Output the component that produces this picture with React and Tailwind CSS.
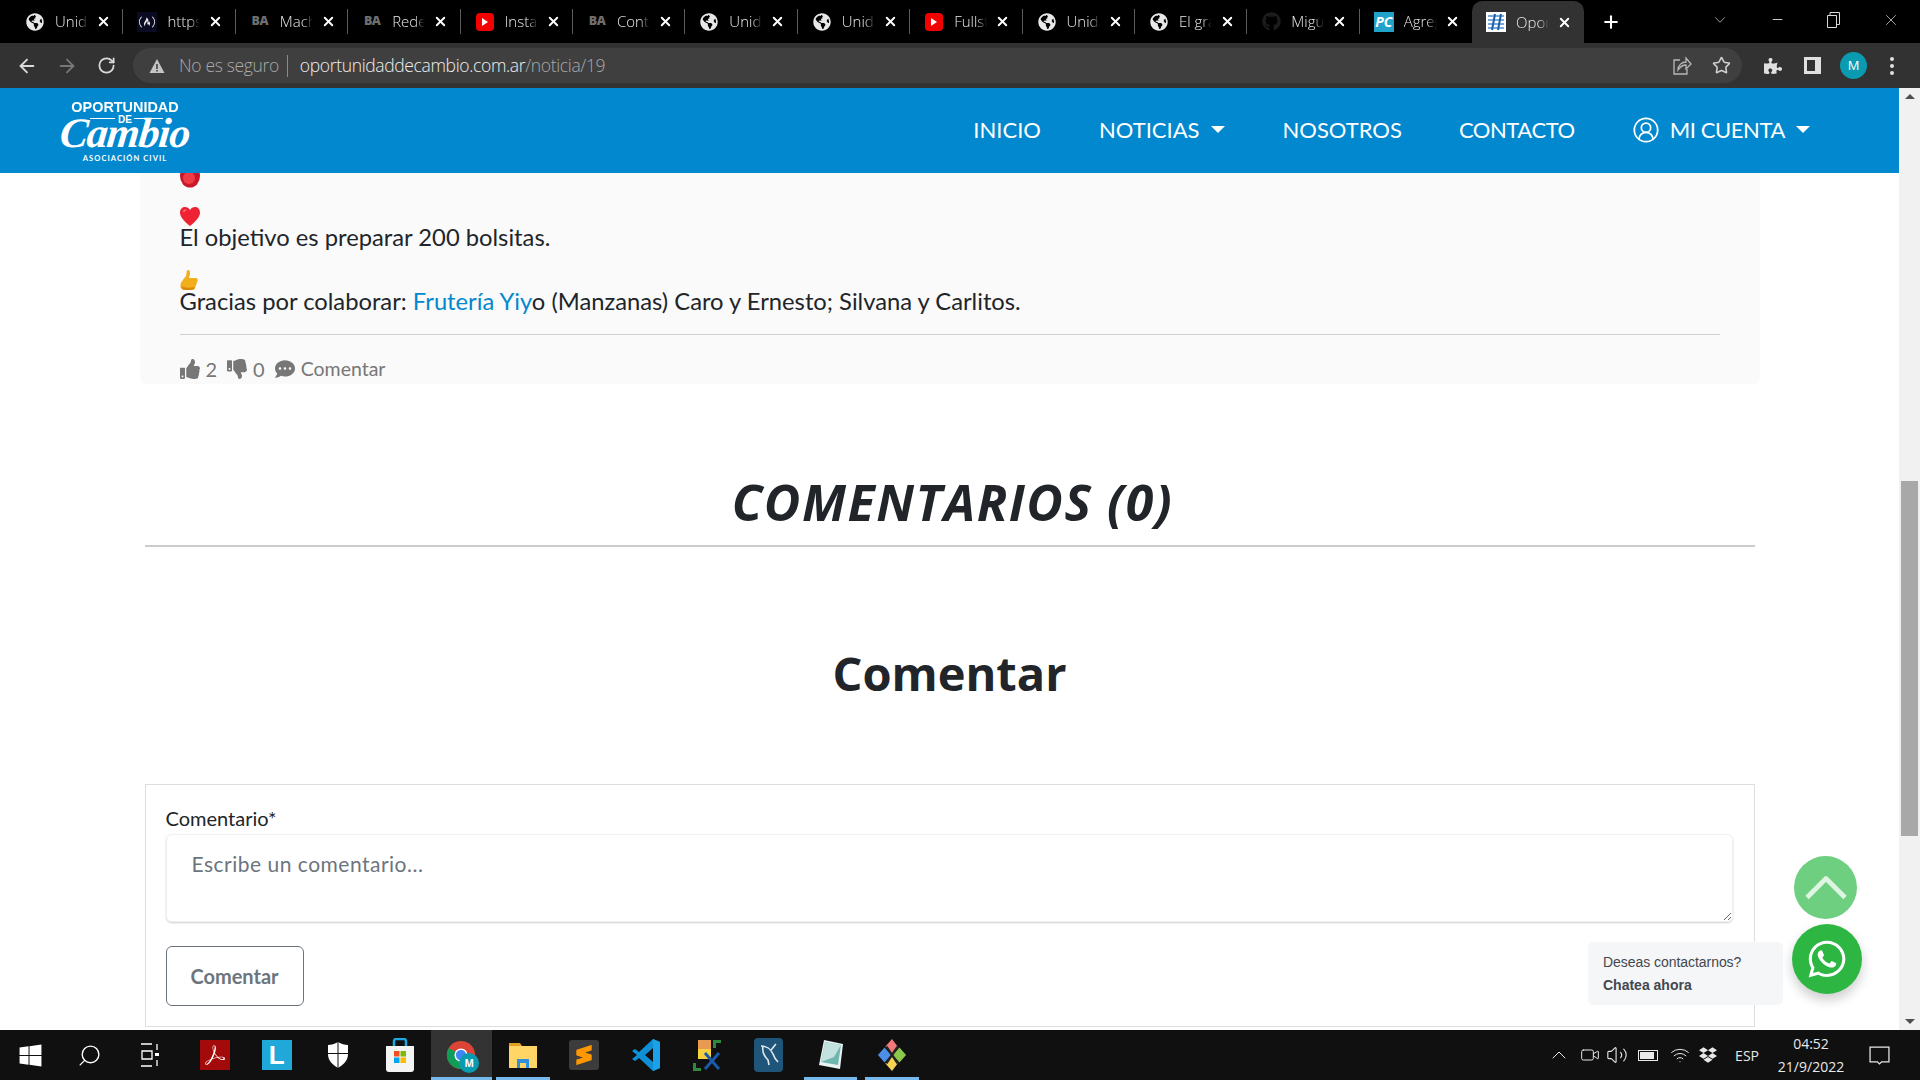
import React from "react";
import {
  ArrowLeft,
  ArrowRight,
  RotateCw,
  Star,
  ChevronDown,
  ChevronUp,
  Plus,
  X,
  Minus,
  Video,
  Volume2,
  Wifi,
  Search,
  CircleUserRound,
} from "lucide-react";
import {
  FaGlobeAmericas,
  FaGithub,
  FaThumbsUp,
  FaThumbsDown,
  FaCommentDots,
  FaWhatsapp,
  FaDropbox,
  FaWindows,
  FaPuzzlePiece,
} from "react-icons/fa";
import { SiFreecodecamp, SiAdobeacrobatreader, SiSublimetext } from "react-icons/si";

const jost = "font-['Lato','Liberation_Sans',sans-serif]";
const ui = "font-['Open_Sans','Liberation_Sans',sans-serif]";

const Globe = () => <FaGlobeAmericas className="w-[18px] h-[18px] text-[#e8e8e8]" />;

const Ba = () => (
  <span className="w-[18px] h-[18px] flex items-center justify-center text-[12.5px] tracking-[-0.5px] font-black text-[#6e6e6e] leading-none">
    BA
  </span>
);

const Yt = () => (
  <span className="w-[18px] h-[18px] flex items-center justify-center bg-[#f40000] rounded-[4px]">
    <span className="w-0 h-0 border-y-[4px] border-y-transparent border-l-[6px] border-l-white" />
  </span>
);

const Fcc = () => (
  <span className="w-[20px] h-[20px] flex items-center justify-center bg-[#0a0a23]">
    <SiFreecodecamp className="w-[16px] h-[16px] text-[#e8e8e8]" />
  </span>
);

const Git = () => <FaGithub className="w-[19px] h-[19px] text-[#1c1c1c]" />;

const Pc = () => (
  <span className="w-[20px] h-[20px] flex items-center justify-center bg-[#21a3c9] text-white text-[14px] font-bold italic leading-none">
    PC
  </span>
);

const Site = () => (
  <svg viewBox="0 0 20 20" className="w-[20px] h-[20px]">
    <rect width="20" height="20" fill="#fff" />
    <path d="M2 4h16M2 8h16M2 12h16M2 16h16" stroke="#4a90d0" strokeWidth="1.500" />
    <path d="M6 18 9 2M12 18l3-16" stroke="#1c5fa8" strokeWidth="2" />
  </svg>
);

const tabs = [
  { icon: <Globe />, title: "Unidad" },
  { icon: <Fcc />, title: "https" },
  { icon: <Ba />, title: "Machine" },
  { icon: <Ba />, title: "Redes" },
  { icon: <Yt />, title: "Instal" },
  { icon: <Ba />, title: "Contin" },
  { icon: <Globe />, title: "Unidad" },
  { icon: <Globe />, title: "Unidad" },
  { icon: <Yt />, title: "Fullstack" },
  { icon: <Globe />, title: "Unidad" },
  { icon: <Globe />, title: "El gran" },
  { icon: <Git />, title: "Miguel" },
  { icon: <Pc />, title: "Agregar" },
  { icon: <Site />, title: "Oportunidad", active: true },
];

const TabBar = () => (
  <div className={`h-[43px] bg-black flex items-stretch pl-[11px] text-[#e8e8e8] ${ui}`}>
    {tabs.map((tab, i) => (
      <div
        key={i}
        className={`w-[112.4px] shrink-0 flex items-center pl-[14px] relative ${
          tab.active ? "bg-[#323232] rounded-t-[10px] mt-[1px]" : ""
        }`}
      >
        <span className="w-[20px] flex justify-center shrink-0">{tab.icon}</span>
        <span className="ml-[10px] w-[33px] overflow-hidden whitespace-nowrap text-[15px] font-light [mask-image:linear-gradient(90deg,#000_70%,transparent)]">
          {tab.title}
        </span>
        <X className="ml-[8px] w-[15px] h-[15px] shrink-0 text-white" strokeWidth={3} />
        {!tab.active && i < 12 && (
          <span className="absolute right-0 top-[9px] bottom-[9px] w-px bg-[#5a5a5a]" />
        )}
      </div>
    ))}
    <div className="ml-[13px] w-[28px] flex items-center justify-center">
      <Plus className="w-[20px] h-[20px] text-white" strokeWidth={2.5} />
    </div>
    <div className="ml-auto flex items-center pb-[4px] text-[#d8d8d8]">
      <ChevronDown className="w-[18px] h-[18px] mr-[41px]" strokeWidth={1} />
      <Minus className="w-[15px] h-[15px] mr-[42px]" strokeWidth={1.5} />
      <svg viewBox="0 0 13 16" className="w-[13px] h-[16px] mr-[42px]" fill="none" stroke="#d8d8d8" strokeWidth="1">
        <path d="M.5 3.500h9v12h-9zM3 3.500V.5h9.500v12H9.500" />
      </svg>
      <X className="w-[18px] h-[18px] mr-[20px]" strokeWidth={1} />
    </div>
  </div>
);

const ShareBox = () => (
  <svg viewBox="0 0 20 20" className="ml-auto w-[20px] h-[20px]" fill="none" stroke="#b8b8b8" strokeWidth="1.300">
    <path d="M8 4H2v14h13v-5" />
    <path d="M6 14c0-5 4-8 8-8V2l5 6-5 5V9c-4 0-6 2-8 5Z" />
  </svg>
);

const Toolbar = () => (
  <div className={`h-[45px] bg-[#323232] flex items-center pl-[16px] pr-[19px] ${ui}`}>
    <ArrowLeft className="w-[22px] h-[22px] text-[#dadada]" strokeWidth={2} />
    <ArrowRight className="ml-[18px] w-[22px] h-[22px] text-[#777]" strokeWidth={2} />
    <RotateCw className="ml-[19px] w-[19px] h-[19px] text-[#dadada]" strokeWidth={2.2} />
    <div className="ml-[17px] w-[1609px] h-[35px] rounded-full bg-[#3f3f3f] flex items-center pl-[16px] text-[17.5px] tracking-[-0.35px] font-light">
      <svg viewBox="0 0 16 16" className="w-[16px] h-[16px]">
        <path d="M8 1 15.5 15H.5Z" fill="#c4c4c4" />
        <path d="M7.2 6h1.6v5H7.2zM7.2 12h1.6v1.6H7.2z" fill="#3f3f3f" />
      </svg>
      <span className="ml-[14px] text-[#a9a9a9]">No es seguro</span>
      <span className="ml-[8px] w-px h-[22px] bg-[#8a8a8a]" />
      <span className="ml-[12px] text-[#f0f0f0]">oportunidaddecambio.com.ar</span>
      <span className="text-[#a9a9a9]">/noticia/19</span>
      <ShareBox />
      <Star className="ml-[20px] mr-[11px] w-[19px] h-[19px] text-[#d0d0d0]" strokeWidth={2} />
    </div>
    <FaPuzzlePiece className="ml-[22px] w-[18px] h-[18px] text-[#e0e0e0]" />
    <span className="ml-[22px] w-[17px] h-[17px] border-[3px] border-[#e0e0e0] border-r-[6px]" />
    <span className="ml-[19px] w-[27px] h-[27px] rounded-full bg-[#0b9bb0] flex items-center justify-center text-[13px] text-white">
      M
    </span>
    <span className="ml-[23px] flex flex-col gap-[3px]">
      <span className="w-[4px] h-[4px] rounded-full bg-[#e0e0e0]" />
      <span className="w-[4px] h-[4px] rounded-full bg-[#e0e0e0]" />
      <span className="w-[4px] h-[4px] rounded-full bg-[#e0e0e0]" />
    </span>
  </div>
);

const Caret = () => (
  <span className="ml-[11px] w-0 h-0 border-x-[7.5px] border-x-transparent border-t-[7px] border-t-white" />
);

const Logo = () => (
  <div className="ml-[60px] w-[130px] h-[64px] relative text-white text-center">
    <div className="text-[15.5px] leading-[16px] font-bold font-['Liberation_Sans',sans-serif] scale-x-[0.93] whitespace-nowrap">
      OPORTUNIDAD
    </div>
    <div className="text-[10px] leading-[9px] font-bold font-['Liberation_Sans',sans-serif]">DE</div>
    <span className="absolute left-[30px] top-[19px] w-[25px] h-px bg-white" />
    <span className="absolute left-[74px] top-[19px] w-[29px] h-px bg-white" />
    <div className="absolute left-0 top-[13px] w-full text-[42px] leading-[42px] italic font-bold font-['Liberation_Serif',serif] tracking-[-1px] -skew-x-6">
      Cambio
    </div>
    <div className="absolute left-[0px] right-0 bottom-0 text-[7.5px] leading-[8px] font-bold tracking-[1.1px] font-['Lato',sans-serif]">
      ASOCIACIÓN CIVIL
    </div>
  </div>
);

const Navbar = () => (
  <div className={`h-[85px] shrink-0 bg-[#0288ce] flex items-center text-white text-[22px] ${jost}`}>
    <Logo />
    <div className="ml-auto flex items-center mr-[89px] pb-[2px]">
      <span>INICIO</span>
      <span className="ml-[58px]">NOTICIAS</span>
      <Caret />
      <span className="ml-[58px]">NOSOTROS</span>
      <span className="ml-[57px] tracking-[-0.45px]">CONTACTO</span>
      <CircleUserRound className="ml-[57px] w-[28px] h-[28px]" strokeWidth={1.5} />
      <span className="ml-[10px] tracking-[-0.4px]">MI CUENTA</span>
      <Caret />
    </div>
  </div>
);

const Apple = () => (
  <svg viewBox="0 0 20 24" className="w-[20px] h-[24px] block">
    <ellipse cx="10" cy="12" rx="10" ry="11.500" fill="#c9172a" />
    <ellipse cx="9" cy="14" rx="6" ry="6" fill="#ee3b45" />
  </svg>
);

const Heart = () => (
  <svg viewBox="0 0 20 19" className="w-[20px] h-[19px] block">
    <path d="M10 19C4 14 0 10 0 5.500 0 2 2.500 0 5 0c2 0 4 1 5 3 1-2 3-3 5-3 2.500 0 5 2 5 5.500C20 10 16 14 10 19Z" fill="#ee2233" />
    <path d="M3 4c1-1.500 3-2 4-1-1 .3-2.500 1-3 2.500Z" fill="#ff8088" />
  </svg>
);

const ThumbEmoji = () => (
  <svg viewBox="0 0 18 20" className="w-[18px] h-[20px] block">
    <path d="M8 0c2 0 2 2 2 4l-1 4h7c2 0 2 2 1.500 3L15 18c-.5 1.500-2 2-3 2H5c-3 0-5-2-4.500-5C1 11 4 9 6 6c1-2 0-6 2-6Z" fill="#f2ae1c" />
    <path d="M1 16c3 2 9 2 14 1l-1 2-3 1H5c-2 0-3-1-4-4Z" fill="#d98a0c" />
  </svg>
);

const Card = () => (
  <div className={`w-[1620px] mx-auto shrink-0 bg-[#fafafa] rounded-b-md px-[40px] text-[#212529] ${jost}`}>
    <div className="h-[34px] overflow-hidden">
      <div className="-mt-[9px]"><Apple /></div>
    </div>
    <div className="h-[17px]"><Heart /></div>
    <p className="text-[23.75px] leading-[26px]">El objetivo es preparar 200 bolsitas.</p>
    <div className="mt-[20px] h-[18px]"><ThumbEmoji /></div>
    <p className="text-[23.75px] leading-[26px]">
      Gracias por colaborar: <span className="text-[#0288ce]">Frutería Yiy</span>o (Manzanas) Caro y Ernesto; Silvana y Carlitos.
    </p>
    <div className="mt-[20px] h-px bg-[#cfcfcf]" />
    <div className="mt-[19px] h-[30px] flex items-center text-[#777] text-[20px]">
      <FaThumbsUp className="w-[20px] h-[20px]" />
      <span className="ml-[6px]">2</span>
      <FaThumbsDown className="ml-[10px] w-[20px] h-[20px]" />
      <span className="ml-[6px]">0</span>
      <FaCommentDots className="ml-[10px] w-[20px] h-[20px]" />
      <span className="ml-[6px] text-[19.5px]">Comentar</span>
    </div>
  </div>
);

const CommentForm = () => (
  <form className={`w-[1610px] h-[243px] mx-auto shrink-0 border border-[#dedede] pt-[21px] pl-[20px] pr-[21px] ${jost}`}>
    <label className="block text-[20px] leading-[24px] text-[#212529]">Comentario*</label>
    <textarea
      readOnly
      placeholder="Escribe un comentario..."
      className={`mt-[4px] block w-full h-[88px] rounded-md border border-[#f0f0f0] shadow-[0_1px_2px_rgba(0,0,0,0.2)] px-[25px] pt-[14px] text-[21px] leading-[30px] tracking-[0.5px] outline-none placeholder:text-[#6c757d] ${jost}`}
    />
    <button
      type="button"
      className="mt-[24px] block w-[138px] h-[60px] rounded-md border border-[#6c757d] text-[#6c757d] text-[20px] font-bold"
    >
      Comentar
    </button>
  </form>
);

const Floating = () => (
  <>
    <div className="absolute right-[42px] bottom-[111px] w-[63px] h-[63px] rounded-full bg-[#6dcf7f] flex items-center justify-center">
      <ChevronUp className="w-[76px] h-[76px] shrink-0 text-[#def5e2]" strokeWidth={1.5} strokeLinecap="butt" />
    </div>
    <div className="absolute right-[37px] bottom-[36px] w-[70px] h-[70px] rounded-full bg-[#2db742] shadow-[0_6px_12px_rgba(0,0,0,0.2)] flex items-center justify-center">
      <FaWhatsapp className="w-[42px] h-[42px] text-white" />
    </div>
    <div className="absolute right-[116px] bottom-[25px] w-[195px] h-[63px] rounded-[5px] bg-[#f5f6f8] pl-[15px] pt-[10px] text-[#43474e] font-['Liberation_Sans',sans-serif] text-[14px]">
      <div className="leading-[20px] font-light tracking-[-0.05px]">Deseas contactarnos?</div>
      <div className="mt-[3px] leading-[20px] font-bold">Chatea ahora</div>
    </div>
  </>
);

const Scrollbar = () => (
  <div className="w-[21px] shrink-0 bg-[#f1f1f1] flex flex-col items-center">
    <span className="mt-[6px] w-0 h-0 border-x-[5px] border-x-transparent border-b-[5px] border-b-[#505050]" />
    <div className="mt-[382px] w-[17px] h-[355px] bg-[#a8a8a8]" />
    <span className="mt-auto mb-[6px] w-0 h-0 border-x-[5px] border-x-transparent border-t-[5px] border-t-[#505050]" />
  </div>
);

const Page = () => (
  <div className="flex-1 min-h-0 flex bg-white">
    <div className="flex-1 min-w-0 flex flex-col">
      <Navbar />
      <main className="flex-1 min-h-0 relative overflow-hidden flex flex-col">
        <Card />
        <h2 className="mt-[88px] pl-[6px] text-center text-[#212529] text-[50px] tracking-[1.6px] leading-[60px] font-bold italic font-['Open_Sans',sans-serif]">
          COMENTARIOS (0)
        </h2>
        <div className="mt-[13px] w-[1610px] h-[2px] mx-auto shrink-0 bg-[#cccccc]" />
        <h2 className="mt-[96px] text-center text-[#212529] text-[47px] leading-[60px] font-bold font-['Open_Sans',sans-serif]">
          Comentar
        </h2>
        <div className="mt-[81px]">
          <CommentForm />
        </div>
        <Floating />
      </main>
    </div>
    <Scrollbar />
  </div>
);

const Chrome = () => (
  <span className="relative w-[30px] h-[30px] block">
    <svg viewBox="0 0 32 32" className="w-[30px] h-[30px]">
      <circle cx="16" cy="16" r="15" fill="#db4437" />
      <path d="M16 16 29 23.500A15 15 0 0 1 16 31Z" fill="#fbbc05" />
      <path d="M16 16 16 31A15 15 0 0 1 3 8.500Z" fill="#0f9d58" />
      <circle cx="16" cy="16" r="7" fill="#fff" />
      <circle cx="16" cy="16" r="5.500" fill="#4285f4" />
    </svg>
    <span className="absolute -right-[3px] -bottom-[3px] w-[20px] h-[20px] rounded-full bg-[#0b9bb0] text-white text-[10px] flex items-center justify-center font-bold">
      M
    </span>
  </span>
);

const TaskView = () => (
  <svg viewBox="0 0 20 24" className="w-[20px] h-[24px]" fill="none" stroke="#fff" strokeWidth="1.3">
    <path d="M1 1h11M1 23h11M2 8h10v8H2zM17 1v6M17 17v6" />
    <path d="M15 10h4v3h-4z" fill="#fff" stroke="none" />
  </svg>
);

const Shield = () => (
  <svg viewBox="0 0 22 26" className="w-[22px] h-[26px]">
    <path d="M11 0C8 2 4 3 1 3v9c0 7 5 11 10 14 5-3 10-7 10-14V3c-3 0-7-1-10-3Z" fill="#fff" />
    <path d="M10.500 0h1v26h-1zM1 11h20v1H1z" fill="#101010" />
  </svg>
);

const Store = () => (
  <svg viewBox="0 0 30 34" className="w-[30px] h-[34px]">
    <path d="M9 9V3c0-1 1-2 2-2h8c1 0 2 1 2 2v6" fill="none" stroke="#1fa8e0" strokeWidth="2.500" />
    <path d="M1 8h28v23c0 2-1 3-3 3H4c-2 0-3-1-3-3Z" fill="#f4f4f4" />
    <path d="M9 13h5.500v5.500H9z" fill="#f25022" />
    <path d="M15.500 13H21v5.500h-5.500z" fill="#7fba00" />
    <path d="M9 19.500h5.500V25H9z" fill="#00a4ef" />
    <path d="M15.500 19.500H21V25h-5.500z" fill="#ffb900" />
  </svg>
);

const Folder = () => (
  <svg viewBox="0 0 30 30" className="w-[30px] h-[30px]">
    <path d="M1 3h11l2 3H1Z" fill="#e0a020" />
    <path d="M1 6h28v22H1Z" fill="#ffd566" />
    <path d="M9 28v-9h12v9h-3v-5h-6v5Z" fill="#2f8fd8" />
  </svg>
);

const VsCode = () => (
  <svg viewBox="0 0 28 32" className="w-[28px] h-[32px]">
    <path d="M21 0 28 3v26l-7 3L7 19l-4 3-3-2 5-4-5-4 3-2 4 3Z" fill="#0e8fd6" />
    <path d="M21 9v14l-8-7Z" fill="#101010" />
    <path d="M21 0 28 3v26l-7 3Z" fill="#1ba1ea" />
  </svg>
);

const Tools = () => (
  <svg viewBox="0 0 30 32" className="w-[30px] h-[32px]">
    <path d="M6 1h13v19H6Z" fill="#f7d13d" />
    <path d="M6 1h13v9H6Z" fill="#e89a50" />
    <path d="M21 1h8v3h-5v5h-3zM1 24h3v5h5v3H1z" fill="#2f8a3c" />
    <path d="M13 14l14 16M27 14 13 30" stroke="#1b5aa8" strokeWidth="3" />
  </svg>
);

const Workbench = () => (
  <span className="w-[29px] h-[34px] rounded-[4px] bg-[#20557a] flex items-center justify-center">
    <svg viewBox="0 0 24 28" className="w-[24px] h-[28px]" fill="none" stroke="#dfe9f0" strokeWidth="1.600">
      <path d="M4 5c5 0 10 3 12 8 1 3 3 6 5 8" />
      <path d="M6 5c-1 5 1 10 5 14l1 5M14 9c2-2 3-4 5-6" />
    </svg>
  </span>
);

const Note = () => (
  <svg viewBox="0 0 28 32" className="w-[28px] h-[32px]">
    <path d="M8 1 27 5l-3 25L3 26Z" fill="#e8f2f2" />
    <path d="M9 3 25 6l-3 20L5 23Z" fill="#6fb5b0" />
    <path d="M9 3 25 6l-7 12L5 23Z" fill="#c3e2df" />
  </svg>
);

const GitGui = () => (
  <svg viewBox="0 0 32 38" className="w-[30px] h-[36px]">
    <path d="M16 2 9 10l7 8 6-8Z" fill="#f07a7a" />
    <path d="M1 19l7-8 7 8-7 8Z" fill="#4d8fe8" />
    <path d="M31 19l-7-8-7 8 7 8Z" fill="#8cc84b" />
    <path d="M16 36 9 28l7-8 6 8Z" fill="#f7d354" />
    <path d="M10 10l12 18M22 10 10 28" stroke="#222" strokeWidth="2.500" />
  </svg>
);

const taskItems = [
  { icon: <Search className="mr-[3px] w-[25px] h-[25px] text-white -scale-x-100" strokeWidth={1.3} /> },
  { icon: <TaskView /> },
  {
    icon: (
      <span className="w-[30px] h-[30px] bg-[#a30a0a] flex items-center justify-center">
        <SiAdobeacrobatreader className="w-[20px] h-[20px] text-white" />
      </span>
    ),
  },
  {
    icon: (
      <span className="w-[30px] h-[30px] bg-[#1fa8d8] flex items-center justify-center text-white text-[26px] font-bold leading-none font-['Liberation_Sans',sans-serif]">
        L
      </span>
    ),
  },
  { icon: <Shield /> },
  { icon: <Store /> },
  { icon: <Chrome />, active: true, line: true },
  { icon: <Folder />, line: true },
  {
    icon: (
      <span className="w-[30px] h-[30px] rounded-[3px] bg-[#3c3c3c] flex items-center justify-center">
        <SiSublimetext className="w-[20px] h-[20px] text-[#ff9800]" />
      </span>
    ),
  },
  { icon: <VsCode /> },
  { icon: <Tools /> },
  { icon: <Workbench /> },
  { icon: <Note />, line: true },
  { icon: <GitGui />, line: true },
];

const Taskbar = () => (
  <div className={`h-[50px] shrink-0 bg-[#101010] flex items-stretch text-[#e8e8e8] ${ui}`}>
    <div className="w-[61.5px] shrink-0 flex items-center justify-center">
      <FaWindows className="w-[25px] h-[25px] text-white" />
    </div>
    {taskItems.map((item, i) => (
      <div
        key={i}
        className={`shrink-0 flex items-center justify-center relative ${i < 2 ? "w-[59px]" : "w-[61.5px]"} ${
          item.active ? "bg-[#333333]" : ""
        } ${i === 2 ? "ml-[5px]" : ""}`}
      >
        {item.icon}
        {item.line && (
          <span className={`absolute bottom-0 h-[3px] bg-[#76b9ed] ${item.active ? "left-0 right-0" : "left-[4px] right-[4px]"}`} />
        )}
      </div>
    ))}
    <div className="ml-auto flex items-center">
      <ChevronUp className="w-[24px] h-[24px] text-[#e8e8e8]" strokeWidth={1} />
      <Video className="ml-[9px] w-[20px] h-[20px]" strokeWidth={1.2} />
      <Volume2 className="ml-[6px] w-[22px] h-[22px]" strokeWidth={1.2} />
      <span className="ml-[10px] relative w-[20px] h-[11px] border border-[#e8e8e8] p-[1px]">
        <span className="block w-[14px] h-full bg-[#e8e8e8]" />
      </span>
      <Wifi className="ml-[12px] w-[20px] h-[20px]" strokeWidth={1.2} />
      <FaDropbox className="ml-[9px] w-[18px] h-[18px]" />
      <span className="ml-[18px] text-[14px]">ESP</span>
      <div className="ml-[13px] w-[78px] text-center text-[14px] leading-[23px]">
        <div>04:52</div>
        <div>21/9/2022</div>
      </div>
      <svg viewBox="0 0 20 20" className="ml-[19px] mr-[30px] w-[21px] h-[21px]" fill="none" stroke="#e8e8e8" strokeWidth="1.2">
        <path d="M1 2h18v14h-7l-2 2-2-2H1Z" />
      </svg>
    </div>
  </div>
);

export default function App() {
  return (
    <div className="w-[1920px] h-[1080px] flex flex-col overflow-hidden bg-black">
      <TabBar />
      <Toolbar />
      <Page />
      <Taskbar />
    </div>
  );
}
